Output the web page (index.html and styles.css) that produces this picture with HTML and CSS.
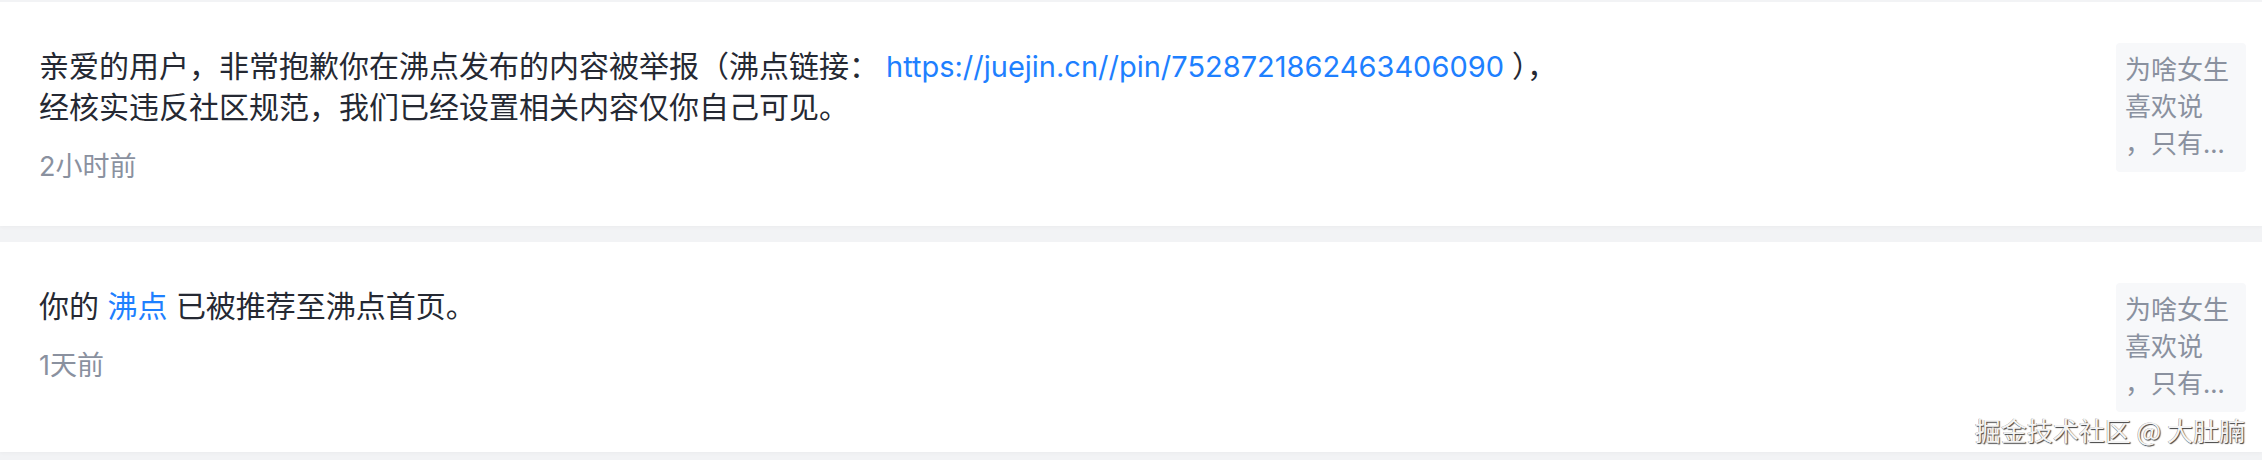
FILE: index.html
```html
<!DOCTYPE html>
<html lang="zh-CN">
<head>
<meta charset="utf-8">
<title>消息</title>
<link rel="stylesheet" href="styles.css">
</head>
<body>
<div class="list">
  <div class="item">
    <div class="content">
      <div class="msg">亲爱的用户，非常抱歉你在沸点发布的内容被举报（沸点链接：<a class="link link-url" href="#">https://juejin.cn//pin/7528721862463406090</a>），<br>经核实违反社区规范，我们已经设置相关内容仅你自己可见。</div>
      <div class="time">2小时前</div>
    </div>
    <div class="thumb">为啥女生喜欢说<br>，只有...</div>
  </div>
  <div class="item">
    <div class="content">
      <div class="msg">你的 <a class="link" href="#">沸点</a> 已被推荐至沸点首页。</div>
      <div class="time">1天前</div>
    </div>
    <div class="thumb">为啥女生喜欢说<br>，只有...</div>
  </div>
</div>
<div class="watermark">掘金技术社区 @ 大肚腩</div>
</body>
</html>
```

FILE: styles.css
```css
html, body {
  margin: 0;
  padding: 0;
}
body {
  background: #f2f3f5;
  font-family: "Inter", "Noto Sans CJK SC", sans-serif;
  position: relative;
  width: 2262px;
  height: 460px;
  overflow: hidden;
}
.list {
  padding-top: 2px;
  display: flex;
  flex-direction: column;
  gap: 16px;
}
.item {
  background: #ffffff;
  display: flex;
  align-items: flex-start;
  justify-content: space-between;
  padding: 41px 16px 40px 39px;
  box-shadow: 0 2px 3px rgba(0, 0, 0, 0.025);
}
.content {
  display: flex;
  flex-direction: column;
  gap: 22px;
  padding: 3px 0 1px;
}
.msg {
  font-size: 30px;
  line-height: 40px;
  color: #252933;
}
.link {
  color: #1e80ff;
  text-decoration: none;
}
.link-url {
  font-size: 29px;
  margin: 0 8px 0 7px;
}
.time {
  font-size: 27px;
  line-height: 36px;
  color: #8a919f;
}
.thumb {
  box-sizing: border-box;
  width: 130px;
  height: 129px;
  padding: 6px 9px;
  background: #f7f8fa;
  border-radius: 4px;
  font-size: 26px;
  line-height: 37px;
  color: #8a919f;
  font-family: "Noto Sans CJK SC", sans-serif;
}
.watermark {
  position: absolute;
  right: 17px;
  top: 412px;
  font-size: 26px;
  line-height: 36px;
  color: #f4f4f4;
  font-family: "Noto Sans CJK SC", sans-serif;
  text-shadow: 1px 1px 1px rgba(0, 0, 0, 0.75), -0.5px -0.5px 0.5px rgba(0, 0, 0, 0.4);
}
```
